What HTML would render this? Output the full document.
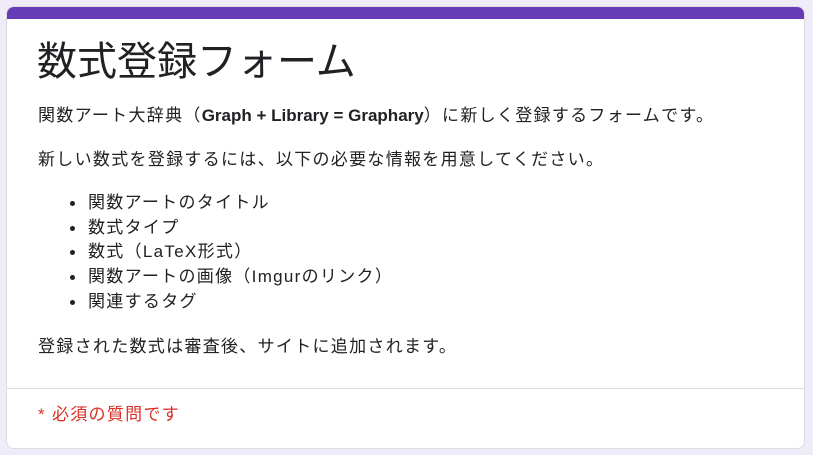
<!DOCTYPE html>
<html><head><meta charset="utf-8"><style>
html,body{margin:0;padding:0;width:813px;height:455px;overflow:hidden;background:#f0ebf8;}
body{font-family:"Liberation Sans","Noto Sans CJK JP",sans-serif;color:#202124;}
.card{position:absolute;left:6px;top:6px;width:799px;height:443px;background:#fff;border-radius:8px;border:1px solid #dadce0;box-sizing:border-box;overflow:hidden;}
.bar{position:absolute;left:-1px;top:-1px;right:-1px;height:13px;background:#673ab7;}
.t{position:absolute;left:31px;white-space:nowrap;font-size:17px;line-height:20px;letter-spacing:1.3px;}
.t b{letter-spacing:0;}
h1{position:absolute;left:30px;top:31px;margin:0;font-weight:400;font-size:40px;line-height:48px;white-space:nowrap;}
.li::before{content:"";position:absolute;left:-18px;top:8px;width:5px;height:5px;border-radius:50%;background:#202124;}
.div{position:absolute;left:0;right:0;top:381px;height:1px;background:#dadce0;}
.req{color:#d93025;}
</style></head><body>
<div class="card"><div class="bar"></div>
<h1>数式登録フォーム</h1>
<div class="t" style="top:99px">関数アート大辞典（<b>Graph + Library = Graphary</b>）に新しく登録するフォームです。</div>
<div class="t" style="top:143px">新しい数式を登録するには、以下の必要な情報を用意してください。</div>
<div class="t li" style="left:81px;top:186px">関数アートのタイトル</div>
<div class="t li" style="left:81px;top:211px">数式タイプ</div>
<div class="t li" style="left:81px;top:235px">数式（LaTeX形式）</div>
<div class="t li" style="left:81px;top:260px">関数アートの画像（Imgurのリンク）</div>
<div class="t li" style="left:81px;top:285px">関連するタグ</div>
<div class="t" style="top:330px">登録された数式は審査後、サイトに追加されます。</div>
<div class="div"></div>
<div class="t req" style="top:398px">* 必須の質問です</div>
</div>
</body></html>
